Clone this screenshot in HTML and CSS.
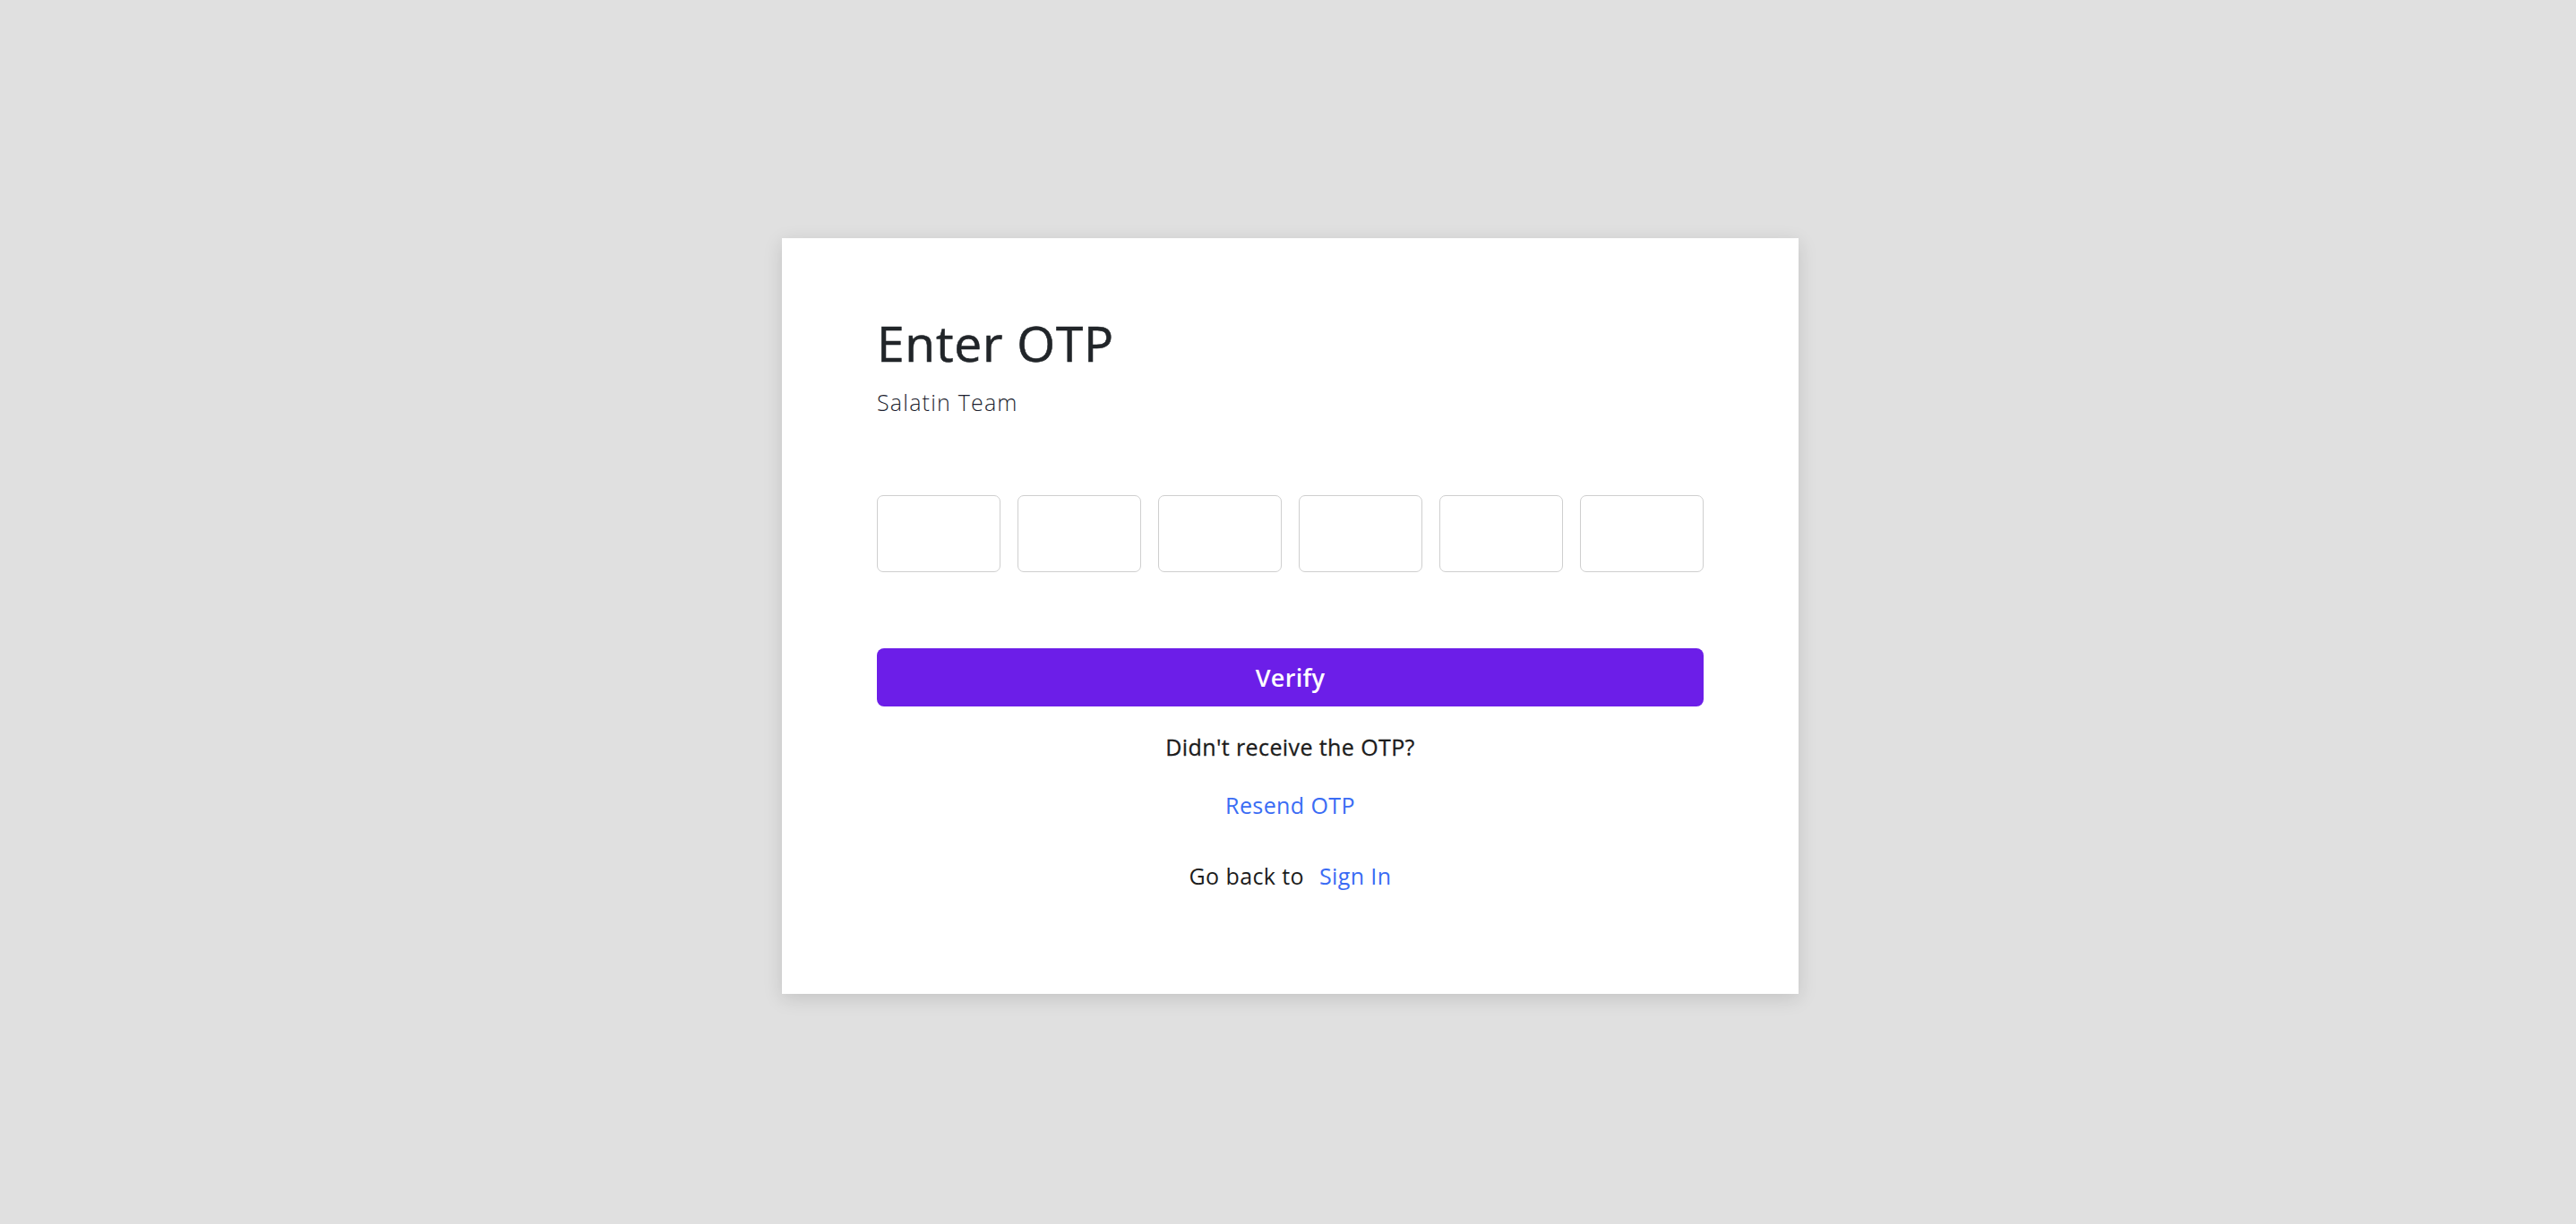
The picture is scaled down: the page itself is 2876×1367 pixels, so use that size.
FILE: index.html
```html
<!DOCTYPE html>
<html lang="en">
<head>
<meta charset="utf-8">
<title>Enter OTP</title>
<link rel="stylesheet" href="styles.css">
</head>
<body>
  <main class="card">
    <h1 class="title">Enter OTP</h1>
    <p class="subtitle">Salatin Team</p>
    <form class="otp-form">
      <div class="otp-row">
        <input class="otp-box" type="text" maxlength="1">
        <input class="otp-box" type="text" maxlength="1">
        <input class="otp-box" type="text" maxlength="1">
        <input class="otp-box" type="text" maxlength="1">
        <input class="otp-box" type="text" maxlength="1">
        <input class="otp-box" type="text" maxlength="1">
      </div>
      <button class="verify-btn" type="button">Verify</button>
    </form>
    <p class="hint">Didn't receive the OTP?</p>
    <a class="link resend" href="#">Resend OTP</a>
    <p class="back">Go back to <a class="link signin" href="#">Sign In</a></p>
  </main>
</body>
</html>
```

FILE: styles.css
```css
* { box-sizing: border-box; }

html, body {
  margin: 0;
  height: 100%;
}

body {
  background: #e0e0e0;
  display: flex;
  align-items: center;
  justify-content: center;
  padding: 9px 0 0 5px;
  font-family: "Open Sans", "Liberation Sans", sans-serif;
  color: #1c1c1c;
}

.card {
  width: 1135px;
  height: 844px;
  background: #ffffff;
  padding: 84px 106px 0 106px;
  box-shadow: 0 5px 20px rgba(0, 0, 0, 0.13);
  display: flex;
  flex-direction: column;
}

.title {
  margin: 0;
  font-size: 55px;
  line-height: 66px;
  font-weight: 500;
  color: #212529;
  letter-spacing: 0.8px;
  -webkit-text-stroke: 0.6px #212529;
}

.subtitle {
  margin: 15px 0 0 0;
  font-size: 25px;
  line-height: 36px;
  font-weight: 300;
  color: #1e1f30;
  letter-spacing: 1.2px;
}

.otp-form {
  display: flex;
  flex-direction: column;
  margin-top: 86px;
}

.otp-row {
  display: flex;
  gap: 19px;
}

.otp-box {
  width: 138px;
  height: 86px;
  border: 1px solid #cfcfcf;
  border-radius: 7px;
  background: #fff;
  font-size: 30px;
  text-align: center;
  outline: none;
}

.verify-btn {
  margin-top: 85px;
  height: 65px;
  width: 100%;
  border: none;
  border-radius: 8px;
  background: #6c1ee8;
  color: #ffffff;
  font-family: inherit;
  font-size: 27px;
  font-weight: 600;
  letter-spacing: 0.3px;
  cursor: pointer;
}

.hint {
  margin: 27px 0 0 0;
  text-align: center;
  font-size: 25px;
  line-height: 36px;
  color: #1c1c1c;
  letter-spacing: 0.4px;
  -webkit-text-stroke: 0.3px #1c1c1c;
}

.link {
  color: #3a6cf4;
  text-decoration: none;
}

.resend {
  display: block;
  margin-top: 29px;
  text-align: center;
  font-size: 25px;
  line-height: 36px;
  letter-spacing: 0.4px;
}

.back {
  margin: 43px 0 0 0;
  text-align: center;
  font-size: 25px;
  line-height: 36px;
  color: #1c1c1c;
  letter-spacing: 0.4px;
}

.signin {
  margin-left: 10px;
}
```
